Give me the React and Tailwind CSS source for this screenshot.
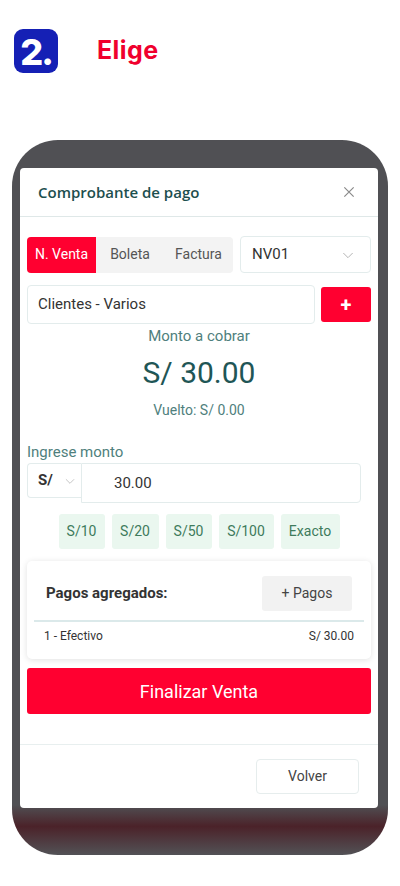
import React from 'react';

const ChevronDown = ({ className }) => (
    <svg viewBox="0 0 24 24" className={className} fill="none" stroke="currentColor" strokeWidth="1.5">
        <path d="M5 9l7 7 7-7" />
    </svg>
);

const quick = [
    { label: 'S/10', w: 'w-[46px]' },
    { label: 'S/20', w: 'w-[47px]' },
    { label: 'S/50', w: 'w-[46px]' },
    { label: 'S/100', w: 'w-[55px]' },
    { label: 'Exacto', w: 'w-[59px]' },
];

export default function App() {
    return (
        <div className="w-[400px] h-[886px] bg-white overflow-hidden font-['Roboto',sans-serif]">
            {/* Step title */}
            <div className="flex items-center pt-[29px] pl-[14px]">
                <div className="w-[44px] h-[44px] rounded-[9px] bg-[#1520b5] flex items-center justify-center">
                    <span className="text-white text-[36px] font-extrabold leading-none font-['Inter',sans-serif] tracking-[-2px] mt-[2px]">2.</span>
                </div>
                <span className="ml-[39px] text-[#f0002d] text-[25px] font-bold font-['Inter',sans-serif] tracking-[0.4px]">Elige</span>
            </div>

            {/* Phone */}
            <div className="mt-[67px] ml-[12px] w-[376px] h-[715px] rounded-[46px] bg-[linear-gradient(to_bottom,#505054_0%,#505054_93%,#4b2229_96%,#525256_100%)] pt-[28px] pl-[8px] pr-[10px]">
                <div className="bg-white rounded-[4px] h-[640px] flex flex-col">
                    {/* Modal header */}
                    <div className="h-[49px] border-b border-[#dfe8e8] flex items-center justify-between pl-[18px] pr-[21px]">
                        <span className="text-[15px] font-semibold text-[#1d4f4e] font-['Open_Sans',sans-serif]">Comprobante de pago</span>
                        <svg viewBox="0 0 24 24" className="w-[16px] h-[16px] text-[#8a8a8a]" fill="none" stroke="currentColor" strokeWidth="1.8">
                            <path d="M5 5l14 14M19 5L5 19" />
                        </svg>
                    </div>

                    {/* Body */}
                    <div className="px-[7px] pt-[19px] flex-1">
                        <div className="flex items-center gap-[7px]">
                            <div className="flex w-[206px] h-[36px] bg-[#f3f3f3] rounded-[4px] overflow-hidden text-[14px]">
                                <div className="w-[69px] bg-[#ff0030] text-white flex items-center justify-center">N. Venta</div>
                                <div className="w-[68px] text-[#555] flex items-center justify-center">Boleta</div>
                                <div className="w-[69px] text-[#555] flex items-center justify-center">Factura</div>
                            </div>
                            <div className="flex-1 h-[37px] border border-[#e3ecec] rounded-[4px] flex items-center justify-between pl-[11px] pr-[14px]">
                                <span className="text-[15px] text-[#333]">NV01</span>
                                <ChevronDown className="w-[16px] h-[16px] text-[#b5b5b5]" />
                            </div>
                        </div>

                        <div className="flex items-center gap-[6px] mt-[12px]">
                            <div className="w-[288px] h-[39px] border border-[#e3ecec] rounded-[4px] flex items-center pl-[10px] text-[15px] text-[#333]">
                                Clientes - Varios
                            </div>
                            <div className="flex-1 h-[35px] bg-[#ff0030] rounded-[3px] flex items-center justify-center text-white text-[20px] font-bold leading-none">+</div>
                        </div>

                        <div className="text-center text-[15px] text-[#4f7f7d] leading-[20px] mt-[2px]">Monto a cobrar</div>
                        <div className="text-center text-[30px] text-[#1f5656] leading-[40px] mt-[7px]">S/ 30.00</div>
                        <div className="text-center text-[14px] text-[#4f7f7d] leading-[20px] mt-[7px]">Vuelto: S/ 0.00</div>

                        <div className="text-[15px] text-[#4f7f7d] leading-[20px] mt-[22px]">Ingrese monto</div>
                        <div className="flex items-start mt-[1px]">
                            <div className="w-[54px] h-[35px] border border-[#e3ecec] border-r-0 rounded-l-[4px] flex items-center pl-[10px] gap-[10px]">
                                <span className="text-[15px] font-bold text-[#333]">S/</span>
                                <ChevronDown className="w-[14px] h-[14px] text-[#bdbdbd]" />
                            </div>
                            <div className="w-[280px] h-[40px] border border-[#e3ecec] rounded-r-[4px] flex items-center pl-[32px] text-[15px] text-[#333]">
                                30.00
                            </div>
                        </div>

                        <div className="flex justify-center gap-[7px] mt-[11px]">
                            {quick.map((q) => (
                                <div key={q.label} className={`${q.w} h-[35px] bg-[#eaf7ef] rounded-[3px] flex items-center justify-center text-[14px] text-[#3e7b5c]`}>
                                    {q.label}
                                </div>
                            ))}
                        </div>

                        <div className="mt-[12px] h-[98px] rounded-[5px] bg-white shadow-[0_1px_6px_rgba(0,0,0,0.12)] px-[7px] pt-[15px]">
                            <div className="flex items-center justify-between pl-[12px] pr-[12px]">
                                <span className="text-[15px] font-bold text-[#333]">Pagos agregados:</span>
                                <div className="w-[90px] h-[35px] bg-[#f2f2f2] rounded-[3px] flex items-center justify-center text-[14px] text-[#444]">+ Pagos</div>
                            </div>
                            <div className="mt-[9px] border-t-2 border-[#dbe9ea]" />
                            <div className="flex items-center justify-between pl-[10px] pr-[10px] mt-[5px] text-[12px] text-[#333]">
                                <span>1 - Efectivo</span>
                                <span>S/ 30.00</span>
                            </div>
                        </div>

                        <div className="mt-[9px] h-[46px] bg-[#ff0030] rounded-[3px] flex items-center justify-center text-white text-[18px]">
                            Finalizar Venta
                        </div>
                    </div>

                    {/* Footer */}
                    <div className="h-[64px] border-t border-[#e8efef] flex items-center justify-end pr-[19px]">
                        <div className="w-[103px] h-[35px] border border-[#e6eded] rounded-[4px] flex items-center justify-center text-[14px] text-[#444]">
                            Volver
                        </div>
                    </div>
                </div>
            </div>
        </div>
    );
}
